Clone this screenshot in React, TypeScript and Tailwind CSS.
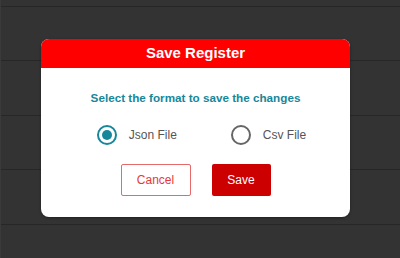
import { useState } from "react";

const rows = ["h-[7px]", "h-[54px]", "h-[55px]", "h-[54px]", "h-[55px]"];

const Radio = ({ checked, label, onClick }: { checked: boolean; label: string; onClick: () => void }) => (
  <button onClick={onClick} className="flex items-center gap-3">
    <span
      className={`flex h-5 w-5 items-center justify-center rounded-full border-2 ${
        checked ? "border-[#17879a]" : "border-[#666666]"
      }`}
    >
      {checked && <span className="h-[10px] w-[10px] rounded-full bg-[#17879a]" />}
    </span>
    <span className="text-[12px] leading-[14px] text-[#555555]">{label}</span>
  </button>
);

const App = () => {
  const [format, setFormat] = useState<"json" | "csv">("json");

  return (
    <div
      className="relative h-[258px] w-[400px] overflow-hidden border-l border-[#3a3a3a] bg-[#333333]"
      style={{ fontFamily: '"Liberation Sans", Arial, sans-serif' }}
    >
      {rows.map((h, i) => (
        <div key={i} className={`${h} border-b border-[#272727]`} />
      ))}

      <div className="absolute left-[40px] top-[39px] flex w-[309px] flex-col overflow-hidden rounded-lg bg-white shadow-[0_1px_3px_rgba(0,0,0,0.35)]">
        <div className="flex h-[29px] items-center justify-center bg-[#ff0000]">
          <h2 className="text-[15px] font-bold text-white">Save Register</h2>
        </div>
        <div className="flex flex-col items-center pt-[23px] pb-[21px]">
          <p className="text-[11.7px] font-bold leading-[14px] text-[#17879a]">
            Select the format to save the changes
          </p>
          <div className="mt-5 flex items-center gap-[54px] pl-3">
            <Radio checked={format === "json"} label="Json File" onClick={() => setFormat("json")} />
            <Radio checked={format === "csv"} label="Csv File" onClick={() => setFormat("csv")} />
          </div>
          <div className="mt-[19px] flex gap-[21px]">
            <button className="h-8 w-[70px] rounded-[2px] border border-[#e66a6a] text-[12px] text-[#e53935]">
              Cancel
            </button>
            <button className="h-8 w-[59px] rounded-[2px] bg-[#cc0000] text-[12px] text-white">
              Save
            </button>
          </div>
        </div>
      </div>
    </div>
  );
};

export default App;
